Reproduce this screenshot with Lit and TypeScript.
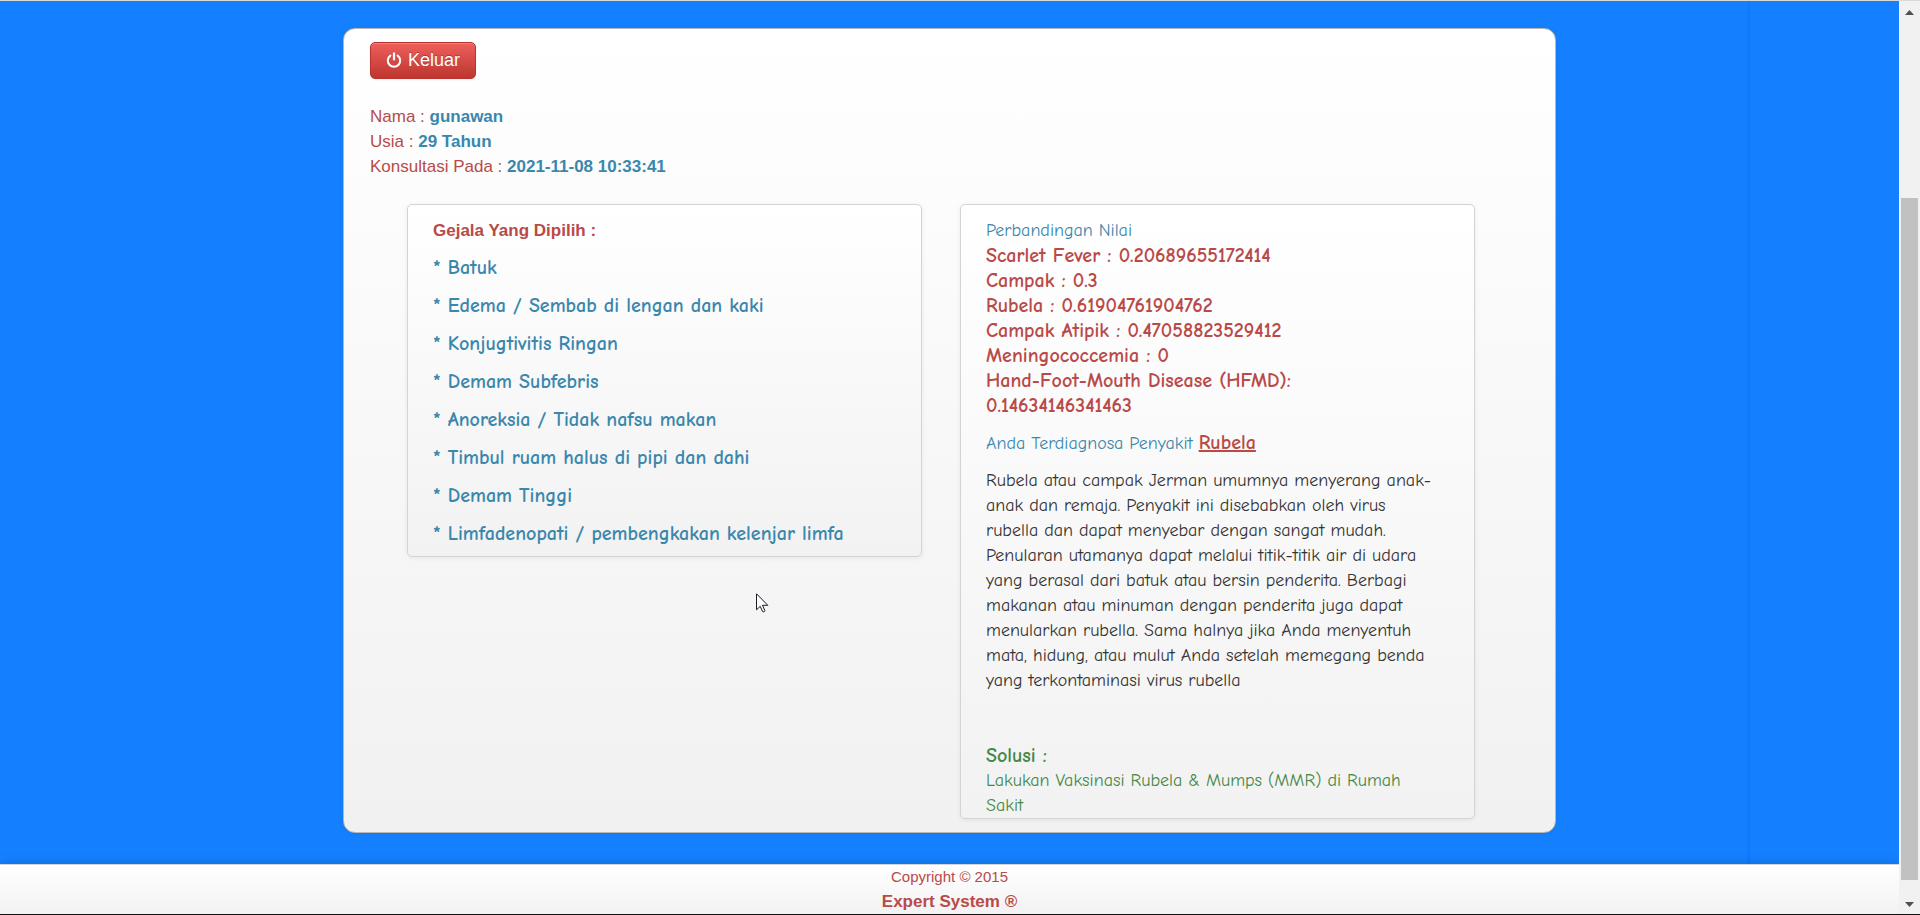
import { LitElement, html, css, svg } from "lit";
import { customElement, property } from "lit/decorators.js";

const symptoms = [
  "Batuk",
  "Edema / Sembab di lengan dan kaki",
  "Konjugtivitis Ringan",
  "Demam Subfebris",
  "Anoreksia / Tidak nafsu makan",
  "Timbul ruam halus di pipi dan dahi",
  "Demam Tinggi",
  "Limfadenopati / pembengkakan kelenjar limfa",
];

const scores = [
  { label: "Scarlet Fever :", value: "0.20689655172414" },
  { label: "Campak :", value: "0.3" },
  { label: "Rubela :", value: "0.61904761904762" },
  { label: "Campak Atipik :", value: "0.47058823529412" },
  { label: "Meningococcemia :", value: "0" },
  { label: "Hand-Foot-Mouth Disease (HFMD):", value: "0.14634146341463", wrap: true },
];

const powerIcon = svg`<path d="M4.4 3.6a6.2 6.2 0 1 0 7.2 0" fill="none" stroke="currentColor" stroke-width="2" stroke-linecap="round"/><path d="M8 1.4v6" stroke="currentColor" stroke-width="2.2" stroke-linecap="round"/>`;

@customElement("info-panel")
class InfoPanel extends LitElement {
  static styles = css`
    :host {
      display: block;
      box-sizing: border-box;
      padding: 13px 25px 0;
      border: 1px solid #d4d4d4;
      border-radius: 5px;
      background: linear-gradient(#fff, #f2f2f2);
      box-shadow: 0 1px 5px rgba(0, 0, 0, 0.07);
    }
  `;
  render() {
    return html`<slot></slot>`;
  }
}

@customElement("scroll-track")
class ScrollTrack extends LitElement {
  static styles = css`
    :host {
      display: flex;
      flex-direction: column;
      width: 21px;
      box-sizing: border-box;
      padding: 1px 2px 0;
      background: #f1f1f1;
    }
    .cap {
      flex: 0 0 20px;
      display: grid;
      place-items: center;
    }
    .cap svg {
      display: block;
      fill: #505050;
    }
    .before { flex: 176 1 0; }
    .thumb { flex: 682 1 0; background: #c1c1c1; }
    .after { flex: 14 1 0; }
  `;
  render() {
    return html`
      <div class="cap"><svg width="9" height="5" viewBox="0 0 9 5"><path d="M0 5 4.5 0 9 5z" /></svg></div>
      <div class="before"></div>
      <div class="thumb"></div>
      <div class="after"></div>
      <div class="cap"><svg width="9" height="5" viewBox="0 0 9 5"><path d="M0 0 4.5 5 9 0z" /></svg></div>
    `;
  }
}

@customElement("app-root")
class AppRoot extends LitElement {
  @property() name = "gunawan";
  @property() age = "29 Tahun";
  @property() date = "2021-11-08 10:33:41";

  static styles = css`
    :host {
      display: flex;
      position: relative;
      box-sizing: border-box;
      min-height: 100vh;
      border-top: 1px solid #d9d9d9;
      border-bottom: 1px solid #111;
      background: #1580ff;
      color: #333;
      font: 17px/25px "Liberation Sans", Arial, sans-serif;
    }
    .page {
      flex: 1;
      min-width: 0;
      display: flex;
      flex-direction: column;
      background: linear-gradient(90deg, transparent, #0a78ff) right 149px top / 4px 100% no-repeat;
    }
    main {
      flex: 1;
      padding: 27px 24px 31px;
    }
    .card {
      box-sizing: border-box;
      max-width: 1213px;
      margin: 0 auto;
      padding: 13px 26px;
      border: 1px solid #b8b8b8;
      border-radius: 12px;
      background: linear-gradient(#fff, #f1f1f1);
      box-shadow: 0 1px 5px rgba(0, 0, 0, 0.07);
    }
    .exit {
      display: flex;
      align-items: center;
      gap: 6px;
      height: 37px;
      padding: 0 15px 1px;
      border: 1px solid #b9322d;
      border-radius: 5px;
      background: linear-gradient(#ee5f5b, #bd362f);
      box-shadow: inset 0 1px 0 rgba(255, 255, 255, 0.2), 0 1px 2px rgba(0, 0, 0, 0.05);
      color: #fff;
      font: 18px/24px "Liberation Sans", Arial, sans-serif;
      text-shadow: 0 -1px 0 rgba(0, 0, 0, 0.25);
      cursor: pointer;
    }
    .patient {
      margin: 25px 0;
      color: #b94a48;
    }
    .blue,
    .patient strong {
      color: #3a87ad;
    }
    .red {
      color: #b94a48;
    }
    .green {
      color: #468847;
    }
    .columns {
      display: grid;
      grid-template-columns: 1fr 1fr;
      align-items: start;
      gap: 38px;
      margin: 0 54px 0 37px;
    }
    h2,
    p,
    ul {
      margin: 0;
      padding: 0;
      font-size: 17px;
      list-style: none;
    }
    .symptoms {
      display: grid;
      gap: 13px;
      margin: 12px 0 10px;
    }
    .comic,
    .comic p {
      font-family: "Comic Neue", "Comic Sans MS", "Liberation Sans", sans-serif;
      font-size: 18px;
    }
    .comic p + p {
      margin-top: 12px;
    }
    .comic strong,
    .symptoms {
      font-weight: bold;
      font-size: 20px;
    }
    .line,
    .value {
      display: block;
    }
    .comic .solution {
      margin-top: 50px;
    }
    footer {
      box-sizing: border-box;
      border-top: 1px solid #d4d4d4;
      background: linear-gradient(#fff, #f2f2f2);
      box-shadow: 0 -1px 10px rgba(0, 0, 0, 0.15);
      color: #b94a48;
      text-align: center;
    }
    small {
      display: block;
      font-size: 15px;
      line-height: 24px;
    }
    .pointer {
      position: absolute;
      left: 756px;
      top: 592px;
    }
  `;

  render() {
    return html`
      <div class="page">
        <main>
          <section class="card">
            <button class="exit" type="button">
              <svg width="16" height="16" viewBox="0 0 16 16" aria-hidden="true">${powerIcon}</svg>Keluar
            </button>
            <div class="patient">
              <div>Nama : <strong>${this.name}</strong></div>
              <div>Usia : <strong>${this.age}</strong></div>
              <div>Konsultasi Pada : <strong>${this.date}</strong></div>
            </div>
            <div class="columns">
              <info-panel>
                <h2 class="red">Gejala Yang Dipilih :</h2>
                <ul class="comic symptoms blue">
                  ${symptoms.map((s) => html`<li>* ${s}</li>`)}
                </ul>
              </info-panel>
              <info-panel class="comic">
                <p class="blue">
                  Perbandingan Nilai
                  ${scores.map(
                    (s) => html`<strong class="line red">${s.label} ${s.wrap ? html`<span class="value">${s.value}</span>` : s.value}</strong>`
                  )}
                </p>
                <p class="blue">Anda Terdiagnosa Penyakit <strong class="red"><u>Rubela</u></strong></p>
                <p>
                  Rubela atau campak Jerman umumnya menyerang anak-<br />anak dan remaja. Penyakit ini disebabkan oleh
                  virus<br />rubella dan dapat menyebar dengan sangat mudah.<br />Penularan utamanya dapat melalui
                  titik-titik air di udara<br />yang berasal dari batuk atau bersin penderita. Berbagi<br />makanan atau
                  minuman dengan penderita juga dapat<br />menularkan rubella. Sama halnya jika Anda menyentuh<br />mata,
                  hidung, atau mulut Anda setelah memegang benda<br />yang terkontaminasi virus rubella
                </p>
                <p class="solution green">
                  <strong class="line">Solusi :</strong>
                  Lakukan Vaksinasi Rubela &amp; Mumps (MMR) di Rumah<br />Sakit
                </p>
              </info-panel>
            </div>
          </section>
        </main>
        <footer>
          <small>Copyright © 2015</small>
          <strong>Expert System ®</strong>
        </footer>
      </div>
      <scroll-track aria-hidden="true"></scroll-track>
      <svg class="pointer" width="13" height="20" viewBox="0 0 13 20" aria-hidden="true">
        <path d="M.5.8v16l3.7-3.5 2.5 5.4c.3.6 2.5-.3 2.2-1L6.5 12.3h5.3z" fill="#fff" stroke="#1a1a2a" />
      </svg>
    `;
  }
}
